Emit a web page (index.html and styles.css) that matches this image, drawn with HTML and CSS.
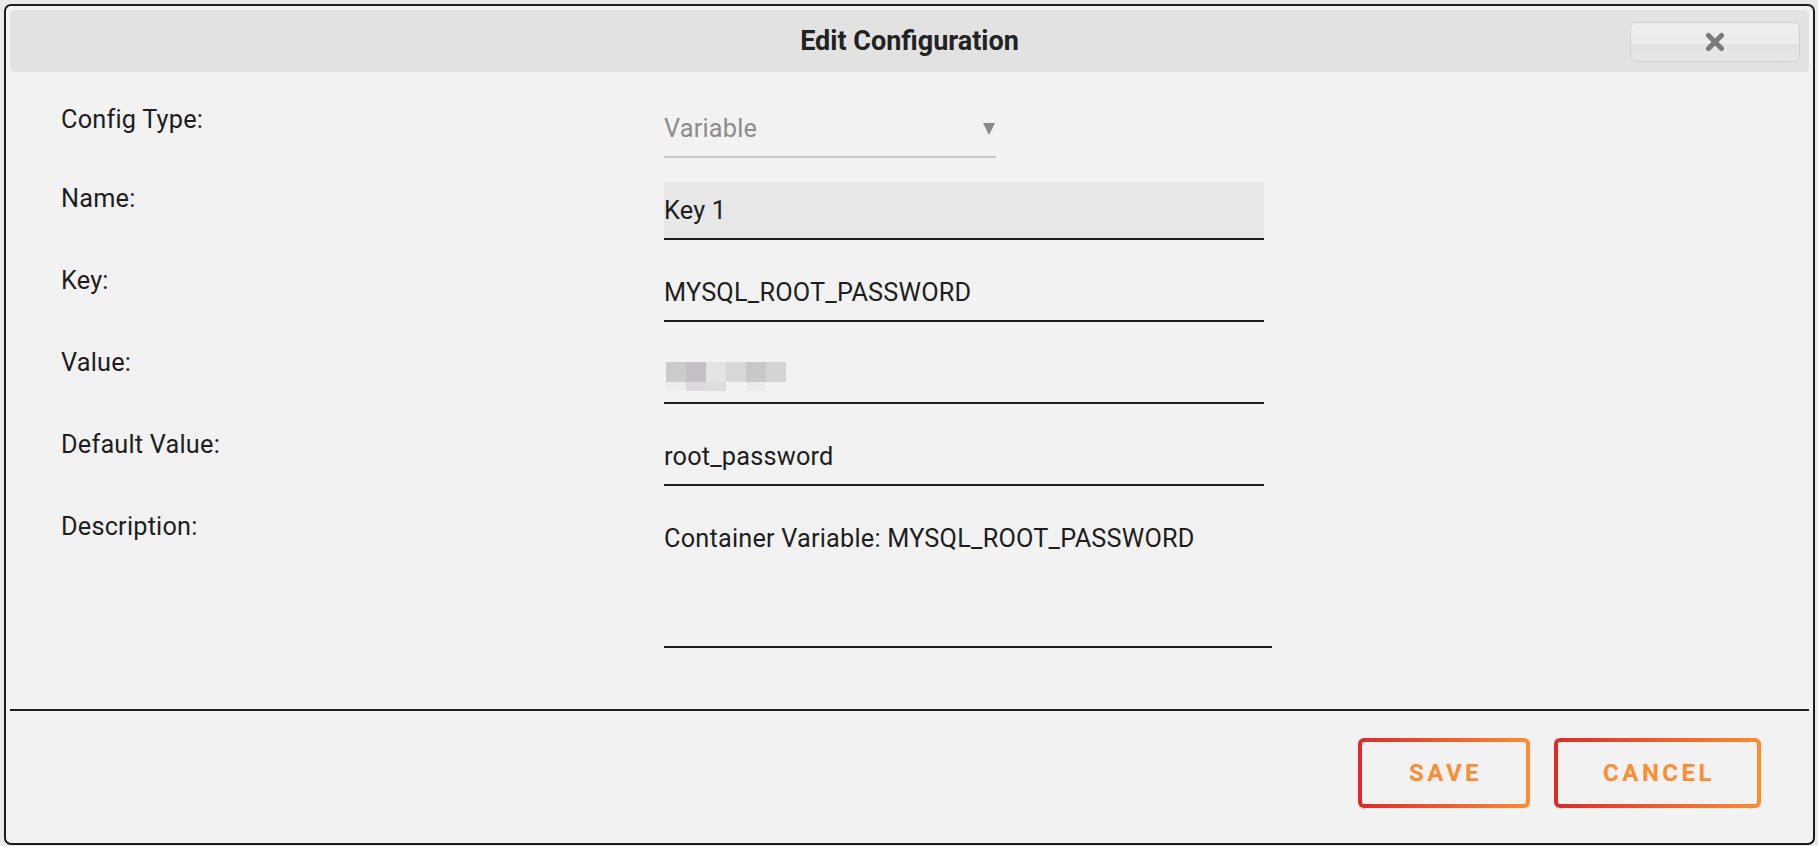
FILE: index.html
```html
<!DOCTYPE html>
<html lang="en">
<head>
<meta charset="utf-8">
<title>Edit Configuration</title>
<link rel="stylesheet" href="styles.css">
</head>
<body>
<div class="dialog">
  <div class="titlebar">
    <span></span>
    <span class="title">Edit Configuration</span>
    <button class="close" type="button" aria-label="Close">
      <svg width="20" height="20" viewBox="0 0 20 20"><path d="M3.5 3.5 L16.5 16.5 M16.5 3.5 L3.5 16.5" stroke="#7a7a7a" stroke-width="5" stroke-linecap="round"/></svg>
    </button>
  </div>
  <div class="content">
    <div class="form">
      <div class="label label-first">Config Type:</div>
      <div class="select">
        <span class="select-text">Variable</span>
        <svg class="select-arrow" width="12" height="12" viewBox="0 0 12 12"><path d="M0 0 H12 L6 12 Z" fill="#8a8a8a"/></svg>
      </div>

      <div class="label">Name:</div>
      <input class="field field-filled" type="text" value="Key 1">

      <div class="label">Key:</div>
      <input class="field" type="text" value="MYSQL_ROOT_PASSWORD">

      <div class="label">Value:</div>
      <div class="field field-masked">
        <div class="mosaic">
          <i class="m1"></i><i class="m2"></i><i class="m3"></i><i class="m4"></i><i class="m5"></i><i class="m6"></i>
          <i class="n1"></i><i class="n2"></i><i class="n3"></i><i class="n4"></i><i class="n5"></i><i class="n6"></i>
        </div>
      </div>

      <div class="label">Default Value:</div>
      <input class="field" type="text" value="root_password">

      <div class="label">Description:</div>
      <textarea class="area">Container Variable: MYSQL_ROOT_PASSWORD</textarea>
    </div>
  </div>
  <div class="footer">
    <button class="btn" type="button">Save</button>
    <button class="btn" type="button">Cancel</button>
  </div>
</div>
</body>
</html>
```
FILE: styles.css
```css
html, body {
  margin: 0;
  padding: 0;
}
body {
  background: #e9e9e9;
  font-family: Roboto, "Liberation Sans", sans-serif;
  color: #1e1e1e;
}
.dialog {
  box-sizing: border-box;
  margin: 4px;
  width: 1811px;
  height: 841px;
  border: 2px solid #1c1c1c;
  border-radius: 7px;
  background: #f2f2f2;
  padding: 4px;
  display: flex;
  flex-direction: column;
}
.titlebar {
  height: 62px;
  flex: none;
  background: #e2e2e2;
  border-radius: 5px;
  display: grid;
  grid-template-columns: 1fr auto 1fr;
  align-items: center;
}
.title {
  font-size: 27px;
  font-weight: 700;
  color: #222;
  line-height: 30px;
}
.close {
  justify-self: end;
  margin-right: 9px;
  width: 170px;
  height: 40px;
  box-sizing: border-box;
  border: 1px solid #d0d0d0;
  border-radius: 6px;
  background: linear-gradient(#efefef 0%, #ebebeb 46%, #f1f1f1 50%, #e4e4e4 56%, #e6e6e6 100%);
  display: flex;
  align-items: center;
  justify-content: center;
  padding: 0;
  margin-top: 1px;
}
.close svg {
  display: block;
  filter: blur(0.4px);
}
.content {
  flex: 1;
  padding: 28px 0 0 51px;
}
.form {
  display: grid;
  grid-template-columns: 603px auto;
  row-gap: 24px;
  align-items: start;
  justify-items: start;
}
.label {
  font-size: 25.3px;
  letter-spacing: 0.2px;
  line-height: 29px;
  padding-top: 2px;
  color: #1e1e1e;
}
.label-first {
  padding-top: 5px;
}
.select {
  box-sizing: border-box;
  width: 332px;
  height: 58px;
  border-bottom: 2px solid #c8c8c8;
  display: flex;
  align-items: center;
  justify-content: space-between;
  padding-right: 1px;
}
.select-text {
  font-size: 25.3px;
  letter-spacing: 0.2px;
  color: #8c8c8c;
}
.select-arrow {
  display: block;
  margin-top: 2px;
}
.field {
  box-sizing: border-box;
  width: 600px;
  height: 58px;
  margin: 0;
  padding: 0;
  border: none;
  border-bottom: 2px solid #1e1e1e;
  border-radius: 0;
  background: transparent;
  font-family: inherit;
  font-size: 25.3px;
  letter-spacing: 0.2px;
  color: #1e1e1e;
  outline: none;
}
.field-filled {
  background: #e7e7e7;
}
.field-masked {
  padding-top: 16px;
}
.mosaic {
  display: grid;
  grid-template-columns: repeat(6, 20px);
  grid-template-rows: 20px 9px;
  margin-left: 2px;
}
.mosaic i {
  display: block;
}
.m1 { background: #cbcbcb; }
.m2 { background: #c5c0c6; }
.m3 { background: #e3e3e3; }
.m4 { background: #d7d7d7; }
.m5 { background: #c8c8c8; }
.m6 { background: #d3d3d3; }
.n1 { background: #ececec; }
.n2 { background: #dcdadc; }
.n3 { background: #dedede; }
.n4 { background: #f2f2f2; }
.n5 { background: #ebebeb; }
.n6 { background: #f2f2f2; }
.area {
  box-sizing: border-box;
  width: 608px;
  height: 138px;
  margin: 0;
  padding: 14px 0 0;
  border: none;
  border-bottom: 2px solid #1e1e1e;
  border-radius: 0;
  background: transparent;
  font-family: inherit;
  font-size: 25.3px;
  letter-spacing: 0.2px;
  line-height: 29px;
  color: #1e1e1e;
  resize: none;
  overflow: hidden;
  outline: none;
}
.footer {
  flex: none;
  box-sizing: border-box;
  height: 130px;
  border-top: 2px solid #1e1e1e;
  padding: 27px 48px 0 0;
  display: flex;
  justify-content: flex-end;
  align-items: flex-start;
  gap: 24px;
}
.btn {
  box-sizing: border-box;
  height: 70px;
  min-width: 172px;
  padding: 0 42px 0 45px;
  border: 4px solid transparent;
  border-radius: 6px;
  background:
    linear-gradient(#f2f2f2, #f2f2f2) padding-box,
    linear-gradient(90deg, #e22828, #ff8c2f) border-box;
  font-family: inherit;
  font-size: 24px;
  font-weight: 700;
  letter-spacing: 3.5px;
  text-transform: uppercase;
  color: #ff8c2f;
}
```
